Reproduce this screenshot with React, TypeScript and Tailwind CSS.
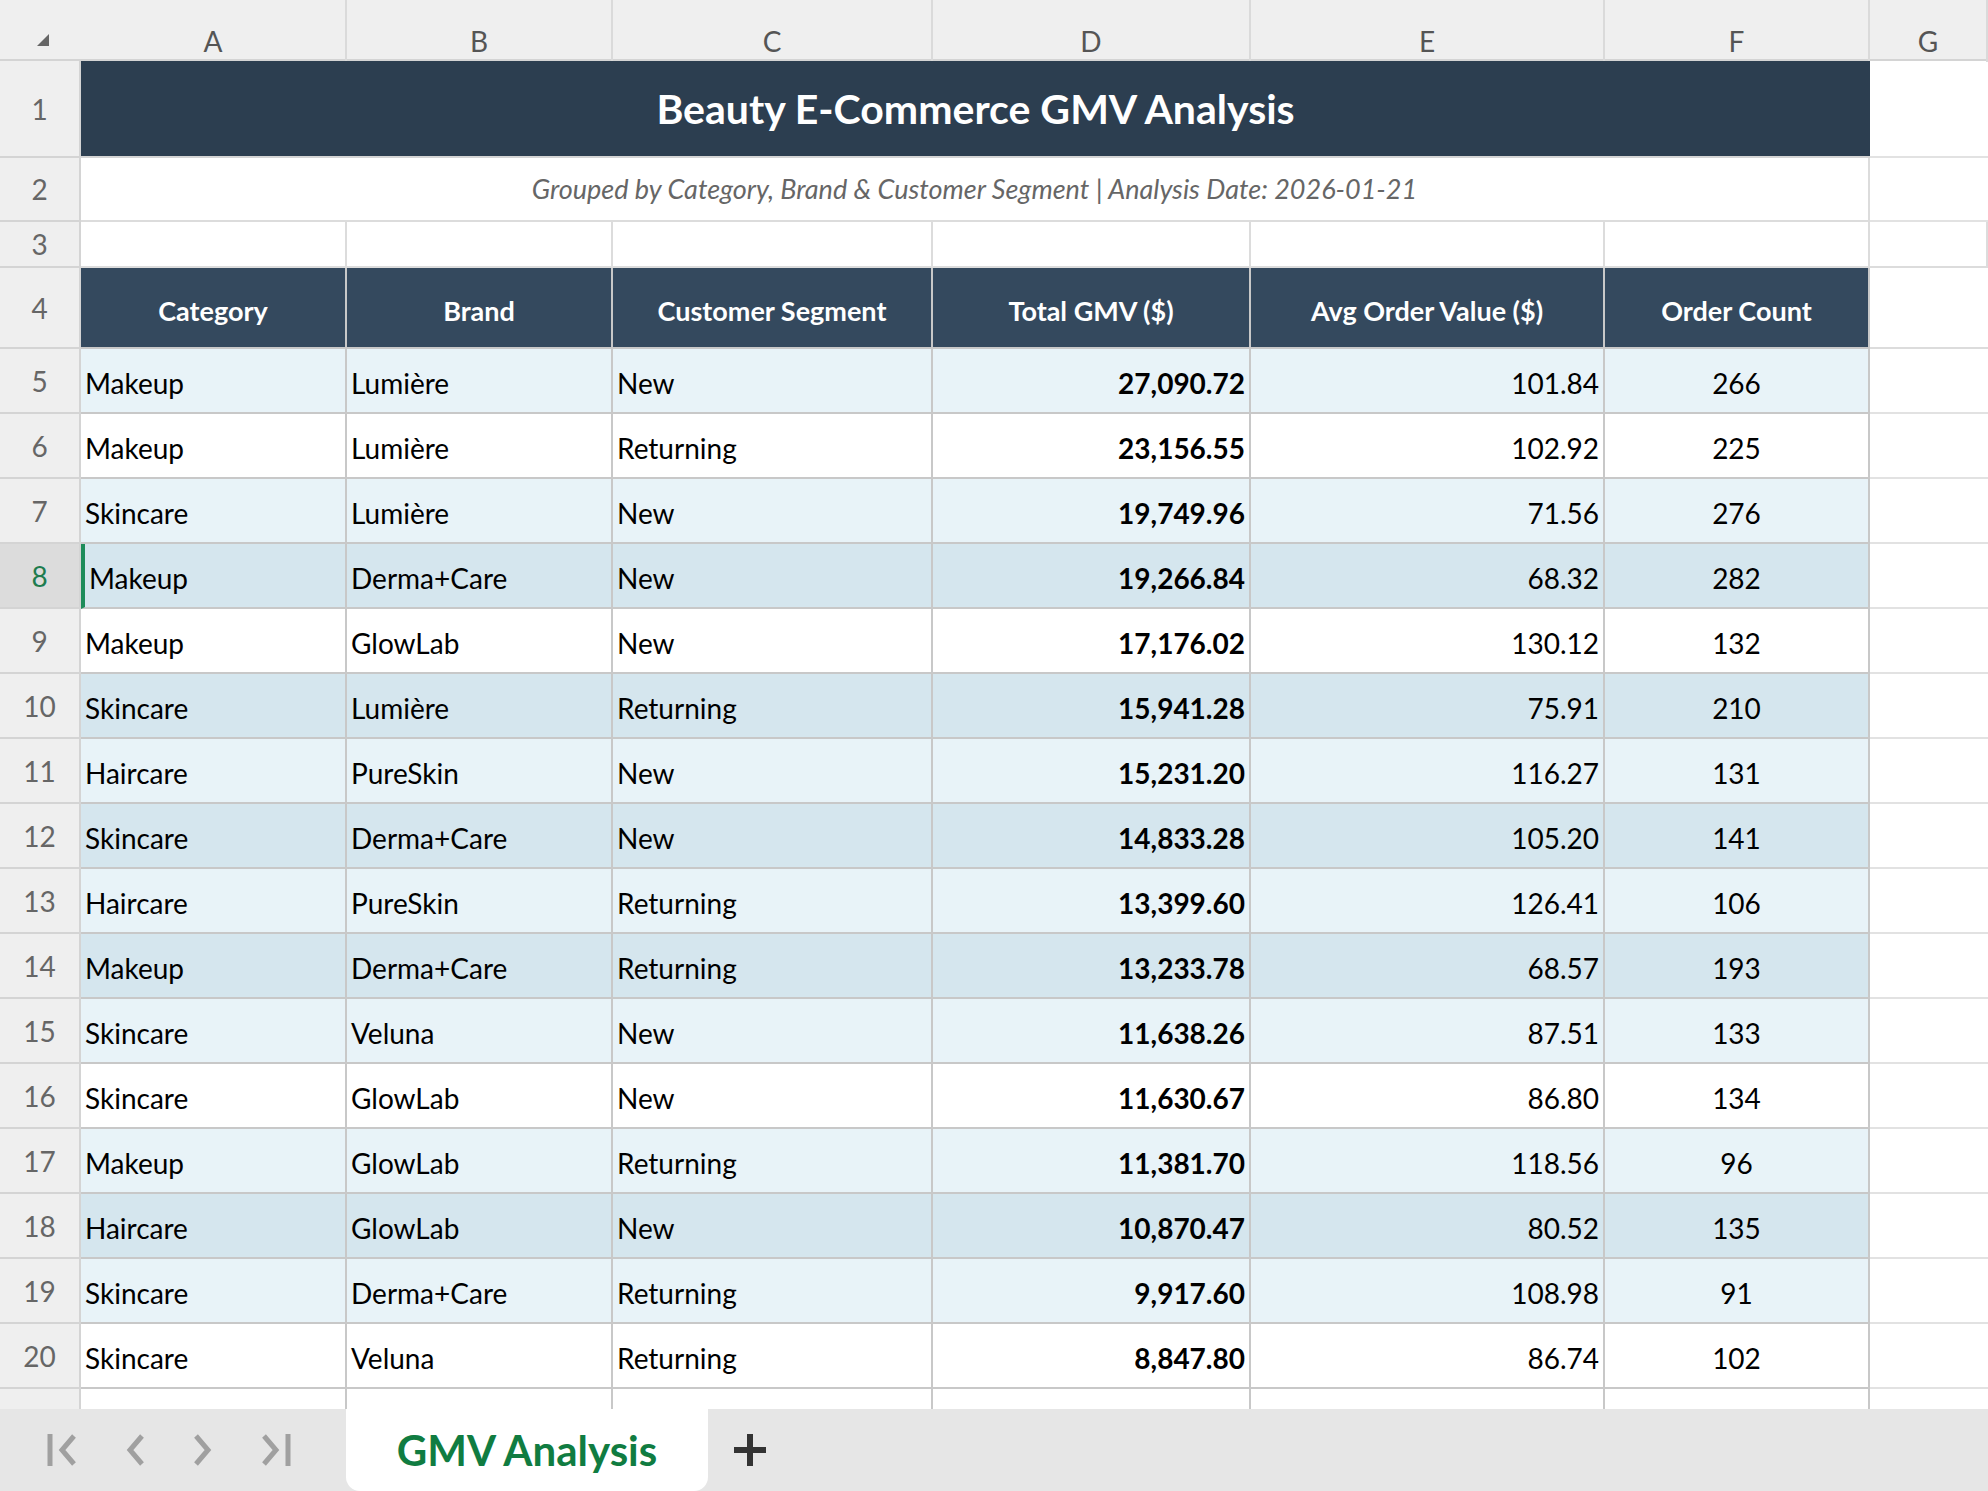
import React from 'react'

const cols = 'grid grid-cols-[81px_266px_266px_320px_318px_354px_265px_1fr]'
const font = { fontFamily: 'Lato, "Open Sans", sans-serif' }

type Row = [string, string, string, string, string, string, 'L' | 'W' | 'D']

const rows: Row[] = [
  ['Makeup', 'Lumière', 'New', '27,090.72', '101.84', '266', 'L'],
  ['Makeup', 'Lumière', 'Returning', '23,156.55', '102.92', '225', 'W'],
  ['Skincare', 'Lumière', 'New', '19,749.96', '71.56', '276', 'L'],
  ['Makeup', 'Derma+Care', 'New', '19,266.84', '68.32', '282', 'D'],
  ['Makeup', 'GlowLab', 'New', '17,176.02', '130.12', '132', 'W'],
  ['Skincare', 'Lumière', 'Returning', '15,941.28', '75.91', '210', 'D'],
  ['Haircare', 'PureSkin', 'New', '15,231.20', '116.27', '131', 'L'],
  ['Skincare', 'Derma+Care', 'New', '14,833.28', '105.20', '141', 'D'],
  ['Haircare', 'PureSkin', 'Returning', '13,399.60', '126.41', '106', 'L'],
  ['Makeup', 'Derma+Care', 'Returning', '13,233.78', '68.57', '193', 'D'],
  ['Skincare', 'Veluna', 'New', '11,638.26', '87.51', '133', 'L'],
  ['Skincare', 'GlowLab', 'New', '11,630.67', '86.80', '134', 'W'],
  ['Makeup', 'GlowLab', 'Returning', '11,381.70', '118.56', '96', 'L'],
  ['Haircare', 'GlowLab', 'New', '10,870.47', '80.52', '135', 'D'],
  ['Skincare', 'Derma+Care', 'Returning', '9,917.60', '108.98', '91', 'L'],
  ['Skincare', 'Veluna', 'Returning', '8,847.80', '86.74', '102', 'W'],
]

const bgFor = { L: 'bg-[#e8f3f8]', W: 'bg-white', D: 'bg-[#d5e6ee]' }

function RowHead({ n, active }: { n: number | string; active?: boolean }) {
  return (
    <div
      className={`flex items-center justify-center border-r-2 border-b-2 border-[#d4d4d4] text-[28px] ${
        active ? 'bg-[#dcdcdc] text-[#1e7c4f]' : 'bg-[#efefef] text-[#666]'
      }`}
    >
      {n}
    </div>
  )
}

export default function App() {
  return (
    <div className="w-[1988px] h-[1491px] overflow-hidden bg-white flex flex-col" style={font}>
      {/* column letters */}
      <div className={`${cols} h-[61px] bg-[#efefef] text-[28px] text-[#555] border-b-2 border-[#d4d4d4]`}>
        <div className="flex items-end justify-end pr-8 pb-4">
          <div className="w-0 h-0 border-l-[12px] border-l-transparent border-b-[12px] border-b-[#666]" />
        </div>
        {['A', 'B', 'C', 'D', 'E', 'F', 'G'].map((c) => (
          <div key={c} className="flex items-center justify-center border-r-2 border-[#dadada] pt-5">
            {c}
          </div>
        ))}
      </div>

      {/* row 1 title */}
      <div className={`${cols} h-[97px]`}>
        <RowHead n={1} />
        <div className="col-span-6 bg-[#2c3e50] flex items-center justify-center text-white font-bold text-[41px] border-b-2 border-[#d4d4d4]">
          Beauty E-Commerce GMV Analysis
        </div>
        <div className="border-b-2 border-[#e2e2e2]" />
      </div>

      {/* row 2 subtitle */}
      <div className={`${cols} h-[64px]`}>
        <RowHead n={2} />
        <div className="col-span-6 flex items-center justify-center italic text-[#666] text-[27px] border-b-2 border-r-2 border-[#dcdcdc]">
          Grouped by Category, Brand &amp; Customer Segment | Analysis Date: 2026-01-21
        </div>
        <div className="border-b-2 border-[#e2e2e2]" />
      </div>

      {/* row 3 */}
      <div className={`${cols} h-[46px]`}>
        <RowHead n={3} />
        {[0, 1, 2, 3, 4, 5, 6].map((i) => (
          <div key={i} className="border-r-2 border-b-2 border-[#dcdcdc]" />
        ))}
      </div>

      {/* row 4 header */}
      <div className={`${cols} h-[81px]`}>
        <RowHead n={4} />
        {['Category', 'Brand', 'Customer Segment', 'Total GMV ($)', 'Avg Order Value ($)', 'Order Count'].map((h) => (
          <div
            key={h}
            className="bg-[#34495e] flex items-center justify-center pt-2 text-white font-bold text-[27px] border-r-2 border-b-2 border-[#c8c8c8] whitespace-nowrap"
          >
            {h}
          </div>
        ))}
        <div className="border-b-2 border-[#dcdcdc]" />
      </div>

      {rows.map((r, i) => {
        const bg = bgFor[r[6]]
        const cell = `${bg} flex items-center border-r-2 border-b-2 border-[#c8c8c8] text-[28px] text-black pt-1 whitespace-nowrap`
        return (
          <div key={i} className={`${cols} h-[65px]`}>
            <RowHead n={i + 5} active={i === 3} />
            <div className={`${cell} pl-1 ${i === 3 ? 'border-l-4 border-l-[#1e8c5a]' : ''}`}>{r[0]}</div>
            <div className={`${cell} pl-1`}>{r[1]}</div>
            <div className={`${cell} pl-1`}>{r[2]}</div>
            <div className={`${cell} justify-end pr-1 font-bold`}>{r[3]}</div>
            <div className={`${cell} justify-end pr-1`}>{r[4]}</div>
            <div className={`${cell} justify-center`}>{r[5]}</div>
            <div className="border-b-2 border-[#e2e2e2]" />
          </div>
        )
      })}

      {/* row 21 partial */}
      <div className={`${cols} flex-1 min-h-0`}>
        <div className="bg-[#efefef] border-r-2 border-[#d4d4d4]" />
        {[0, 1, 2, 3, 4, 5].map((i) => (
          <div key={i} className="border-r-2 border-[#c8c8c8]" />
        ))}
        <div />
      </div>

      {/* sheet tabs */}
      <div className="h-[82px] shrink-0 bg-[#e6e6e6] flex items-stretch">
        <div className="flex items-center gap-[42px] pl-[46px] w-[346px] text-[#a0a0a0]">
          <svg width="36" height="40" viewBox="0 0 36 40" fill="none" stroke="currentColor" strokeWidth="5">
            <path d="M4 4v32M28 6L16 20l12 14" />
          </svg>
          <svg width="24" height="40" viewBox="0 0 24 40" fill="none" stroke="currentColor" strokeWidth="5">
            <path d="M18 6L6 20l12 14" />
          </svg>
          <svg width="24" height="40" viewBox="0 0 24 40" fill="none" stroke="currentColor" strokeWidth="5">
            <path d="M6 6l12 14L6 34" />
          </svg>
          <svg width="36" height="40" viewBox="0 0 36 40" fill="none" stroke="currentColor" strokeWidth="5">
            <path d="M32 4v32M8 6l12 14L8 34" />
          </svg>
        </div>
        <div className="w-[362px] bg-white rounded-b-[14px] flex items-center justify-center text-[#107c41] font-bold text-[42px]">
          GMV Analysis
        </div>
        <div className="flex items-center pl-[22px]">
          <svg width="40" height="40" viewBox="0 0 40 40" stroke="#333" strokeWidth="6">
            <path d="M20 4v32M4 20h32" />
          </svg>
        </div>
      </div>
    </div>
  )
}
